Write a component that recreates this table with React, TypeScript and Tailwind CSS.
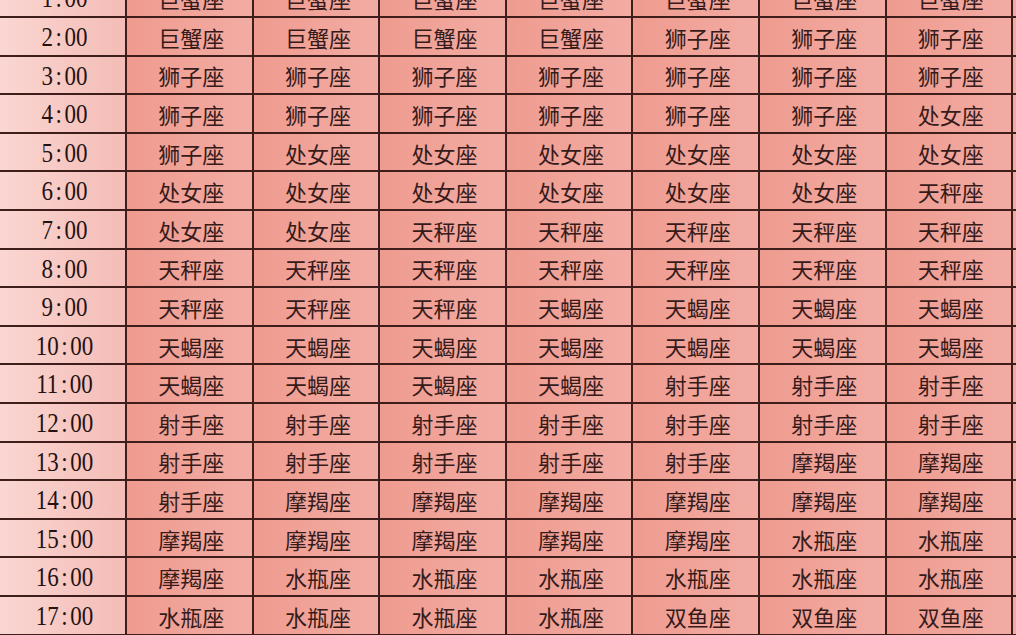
const rows: [string, string[]][] = [
  ["1:00", ["巨蟹座", "巨蟹座", "巨蟹座", "巨蟹座", "巨蟹座", "巨蟹座", "巨蟹座"]],
  ["2:00", ["巨蟹座", "巨蟹座", "巨蟹座", "巨蟹座", "狮子座", "狮子座", "狮子座"]],
  ["3:00", ["狮子座", "狮子座", "狮子座", "狮子座", "狮子座", "狮子座", "狮子座"]],
  ["4:00", ["狮子座", "狮子座", "狮子座", "狮子座", "狮子座", "狮子座", "处女座"]],
  ["5:00", ["狮子座", "处女座", "处女座", "处女座", "处女座", "处女座", "处女座"]],
  ["6:00", ["处女座", "处女座", "处女座", "处女座", "处女座", "处女座", "天秤座"]],
  ["7:00", ["处女座", "处女座", "天秤座", "天秤座", "天秤座", "天秤座", "天秤座"]],
  ["8:00", ["天秤座", "天秤座", "天秤座", "天秤座", "天秤座", "天秤座", "天秤座"]],
  ["9:00", ["天秤座", "天秤座", "天秤座", "天蝎座", "天蝎座", "天蝎座", "天蝎座"]],
  ["10:00", ["天蝎座", "天蝎座", "天蝎座", "天蝎座", "天蝎座", "天蝎座", "天蝎座"]],
  ["11:00", ["天蝎座", "天蝎座", "天蝎座", "天蝎座", "射手座", "射手座", "射手座"]],
  ["12:00", ["射手座", "射手座", "射手座", "射手座", "射手座", "射手座", "射手座"]],
  ["13:00", ["射手座", "射手座", "射手座", "射手座", "射手座", "摩羯座", "摩羯座"]],
  ["14:00", ["射手座", "摩羯座", "摩羯座", "摩羯座", "摩羯座", "摩羯座", "摩羯座"]],
  ["15:00", ["摩羯座", "摩羯座", "摩羯座", "摩羯座", "摩羯座", "水瓶座", "水瓶座"]],
  ["16:00", ["摩羯座", "水瓶座", "水瓶座", "水瓶座", "水瓶座", "水瓶座", "水瓶座"]],
  ["17:00", ["水瓶座", "水瓶座", "水瓶座", "水瓶座", "双鱼座", "双鱼座", "双鱼座"]],
  ["18:00", ["双鱼座", "双鱼座", "双鱼座", "双鱼座", "双鱼座", "双鱼座", "双鱼座"]],
];

function Time({ t }: { t: string }) {
  const [h, m] = t.split(":");
  return (
    <span className="inline-block translate-x-[2px] translate-y-[2px] scale-y-[1.15]">
      {h}
      <span className="px-[2.5px]">:</span>
      {m}
    </span>
  );
}

export default function App() {
  return (
    <div className="h-[635px] w-[1016px] overflow-hidden bg-[#f2aba4]">
      <div className="-mt-[20.6px]">
        {rows.map(([time, signs]) => (
          <div
            key={time}
            className="grid h-[38.6px] grid-cols-[127px_repeat(7,126.6px)_1fr] border-b-2 border-[#3d1e1b]"
          >
            <div
              className="flex items-center justify-center border-r-2 border-[#3d1e1b] bg-gradient-to-r from-[#fad6d2] to-[#f4bcb6] text-[23px] text-[#241212]"
              style={{ fontFamily: '"Liberation Serif", serif' }}
            >
              <Time t={time} />
            </div>
            {signs.map((s, i) => (
              <div
                key={i}
                className="flex items-center justify-center border-r-2 border-[#3d1e1b] bg-gradient-to-r from-[#ef9b8f] to-[#f2aca4] text-[22px] text-[#361b1a]"
                style={{ fontFamily: '"Noto Sans CJK SC", sans-serif' }}
              >
                <span className="translate-x-[2px] translate-y-[1px]">{s}</span>
              </div>
            ))}
            <div className="bg-[#f2aba4]" />
          </div>
        ))}
      </div>
    </div>
  );
}
